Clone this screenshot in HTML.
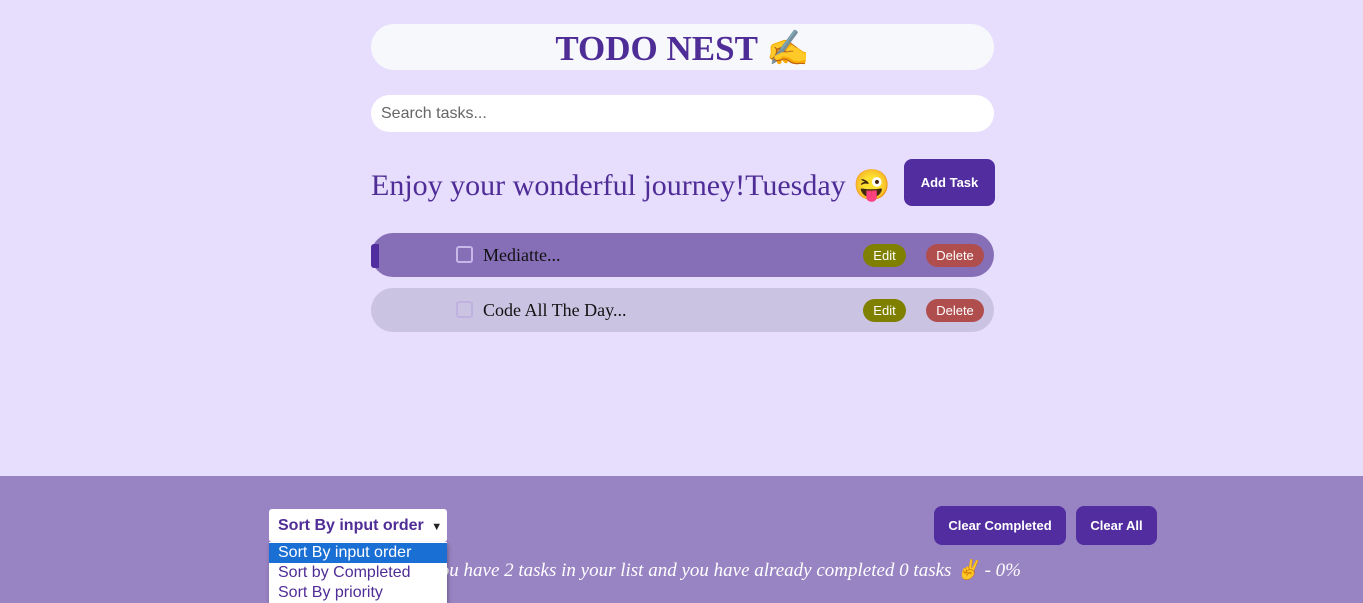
<!DOCTYPE html>
<html><head><meta charset="utf-8"><style>
*{box-sizing:border-box;margin:0;padding:0}
body{width:1363px;height:603px;overflow:hidden;background:#e7ddfd;font-family:"Liberation Sans",sans-serif;position:relative}
.abs{position:absolute}
.title{left:371px;top:24px;width:623px;height:46px;background:#f7f8fc;border-radius:23px;text-align:center;font:bold 35px "Liberation Serif",serif;color:#4f2d96;line-height:50px}
.search{left:371px;top:95px;width:623px;height:37px;background:#fff;border-radius:19px;font-size:16px;color:#666;line-height:37px;padding-left:10px}
.head{left:371px;top:164px;font:30px "Liberation Serif",serif;color:#4f2d96;line-height:44px;white-space:nowrap}
.btn{background:#512da0;color:#fff;font-weight:bold;font-size:13px;border-radius:8px;text-align:center}
.row{left:371px;width:623px;height:44px;border-radius:22px}
.cb{position:absolute;left:85px;top:13px;width:17px;height:17px;border:2px solid #c8b8e8;border-radius:3px}
.rt{position:absolute;left:112px;top:0;font:18px "Liberation Serif",serif;line-height:44px;color:#111}
.ed{position:absolute;left:492px;top:11px;width:43px;height:23px;border-radius:12px;background:#7f7f00;color:#fff;font-size:13px;text-align:center;line-height:23px}
.dl{position:absolute;left:555px;top:11px;width:58px;height:23px;border-radius:12px;background:#b04e4e;color:#fff;font-size:13px;text-align:center;line-height:23px}
.foot{left:0;top:476px;width:1363px;height:127px;background:#9883c3}
</style></head><body>
<div class="abs title">TODO NEST ✍️</div>
<div class="abs search">Search tasks...</div>
<div class="abs head">Enjoy your wonderful journey!Tuesday 😜</div>
<div class="abs btn" style="left:904px;top:159px;width:91px;height:47px;line-height:47px">Add Task</div>
<div class="abs row" style="top:233px;background:#876fb8">
<div class="abs" style="left:0;top:11px;width:8px;height:24px;background:#512da0;border-radius:3px 0 0 3px"></div>
<div class="cb"></div><div class="rt">Mediatte...</div><div class="ed">Edit</div><div class="dl">Delete</div></div>
<div class="abs row" style="top:288px;background:#cbc3e2">
<div class="cb" style="border-color:#bfb2e0"></div><div class="rt">Code All The Day...</div><div class="ed">Edit</div><div class="dl">Delete</div></div>
<div class="abs foot"></div>
<div class="abs" style="left:300px;top:558px;font:italic 19px 'Liberation Serif',serif;color:#fff;white-space:nowrap;width:721px;text-align:right">You have 2 tasks in your list and you have already completed 0 tasks ✌️ - 0%</div>
<div class="abs" style="left:269px;top:509px;width:178px;height:33px;background:#fff;border-radius:3px;color:#4f2d96;font-weight:bold;font-size:16px;line-height:33px;padding-left:9px">Sort By input order <span style="font-size:11px;color:#222;margin-left:3px">▼</span></div>
<div class="abs" style="left:269px;top:542px;width:178px;height:61px;background:#fff;box-shadow:1px 2px 4px rgba(0,0,0,.3);font-size:16px;color:#4f2d96;line-height:20px">
<div style="background:#1a6fd4;color:#fff;padding-left:9px;margin-top:1px">Sort By input order</div>
<div style="padding-left:9px">Sort by Completed</div>
<div style="padding-left:9px">Sort By priority</div></div>
<div class="abs btn" style="left:934px;top:506px;width:132px;height:39px;line-height:39px">Clear Completed</div>
<div class="abs btn" style="left:1076px;top:506px;width:81px;height:39px;line-height:39px">Clear All</div>
</body></html>
